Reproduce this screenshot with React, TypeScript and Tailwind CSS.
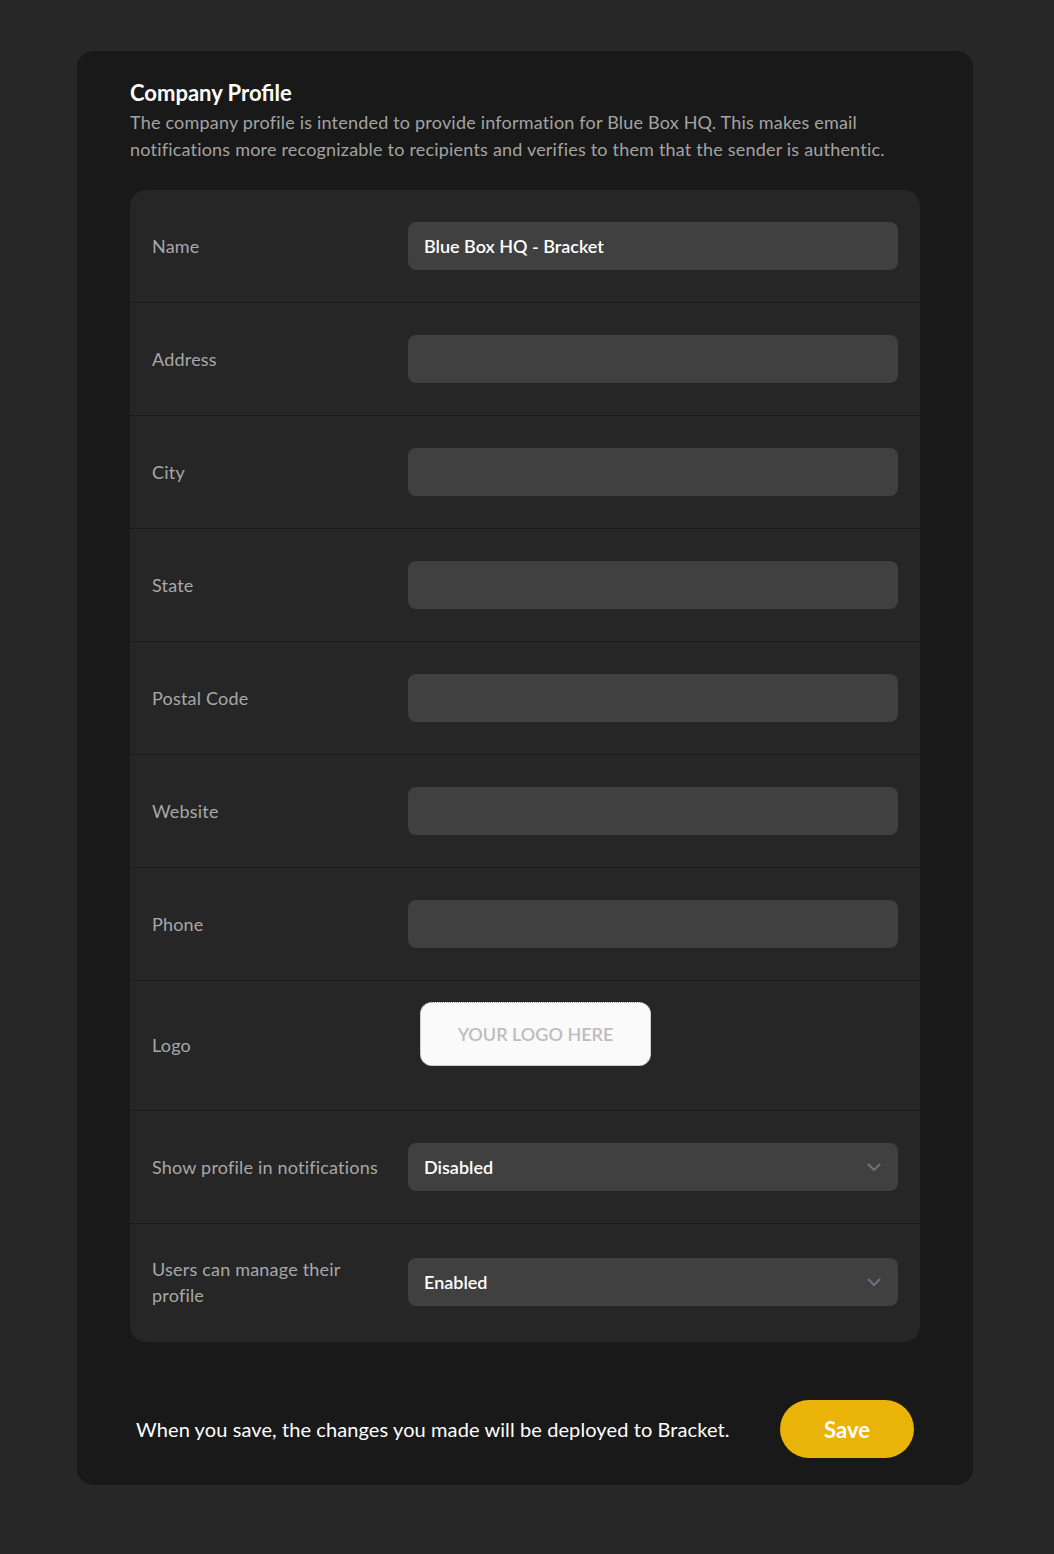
import React from "react";

const font = { fontFamily: "Lato, 'Noto Sans', sans-serif" };

function Chevron() {
  return (
    <svg width="14" height="9" viewBox="0 0 14 9" fill="none">
      <path d="M1.5 1.5L7 7L12.5 1.5" stroke="#6b7280" strokeWidth="2" strokeLinecap="round" strokeLinejoin="round" />
    </svg>
  );
}

function Row({ label, children, last }: { label: string; children: React.ReactNode; last?: boolean }) {
  return (
    <div className={`flex items-center pt-[32px] pl-[22px] pr-[22px] ${last ? "pb-[34px]" : "pb-[32px] border-b border-[#1a1a1a]"}`}>
      <div className="w-[256px] shrink-0 pr-[24px] text-[18px] leading-[26px] tracking-[0.2px] text-[#a8a8a8]">{label}</div>
      <div className="flex-1">{children}</div>
    </div>
  );
}

function Input({ value }: { value?: string }) {
  return (
    <div className="flex h-[48px] items-center rounded-[8px] bg-[#404040] px-[16px] text-[18px] font-semibold text-white">
      {value}
    </div>
  );
}

function Select({ value }: { value: string }) {
  return (
    <div className="flex h-[48px] items-center justify-between rounded-[8px] bg-[#404040] pl-[16px] pr-[17px] text-[18px] font-semibold text-white">
      <span>{value}</span>
      <Chevron />
    </div>
  );
}

export default function App() {
  return (
    <div className="min-h-[1554px] w-full bg-[#272727] pt-[51px] pb-[69px]" style={font}>
      <div className="ml-[77px] w-[896px] rounded-[16px] bg-[#191919] px-[53px] pt-[28px] pb-[27px]">
        <h1 className="text-[22px] font-bold leading-[28px] text-white">Company Profile</h1>
        <p className="mt-[2px] text-[18px] leading-[27px] tracking-[0.2px] text-[#a3a3a3]">
          The company profile is intended to provide information for Blue Box HQ. This makes email notifications more recognizable to recipients and verifies to them that the sender is authentic.
        </p>
        <div className="mt-[27px] rounded-[16px] bg-[#262626]">
          <Row label="Name"><Input value="Blue Box HQ - Bracket" /></Row>
          <Row label="Address"><Input /></Row>
          <Row label="City"><Input /></Row>
          <Row label="State"><Input /></Row>
          <Row label="Postal Code"><Input /></Row>
          <Row label="Website"><Input /></Row>
          <Row label="Phone"><Input /></Row>
          <div className="flex items-center border-b border-[#1a1a1a] pt-[21px] pb-[22px] pl-[22px] pr-[22px]">
            <div className="w-[256px] shrink-0 text-[18px] leading-[26px] tracking-[0.2px] text-[#a8a8a8]">Logo</div>
            <div className="flex-1">
              <div className="mb-[22px] ml-[12px] flex h-[64px] w-[231px] items-center justify-center rounded-[12px] border border-dotted border-[#9e9e9e] bg-[#fafafa] text-[18px] font-semibold text-[#bdbdbd]">
                YOUR LOGO HERE
              </div>
            </div>
          </div>
          <Row label="Show profile in notifications"><Select value="Disabled" /></Row>
          <Row label="Users can manage their profile" last><Select value="Enabled" /></Row>
        </div>
        <div className="mt-[58px] flex items-center justify-between pl-[6px] pr-[6px]">
          <span className="text-[20px] leading-[28px] text-white tracking-[0.1px]">
            When you save, the changes you made will be deployed to Bracket.
          </span>
          <button className="flex h-[58px] w-[134px] items-center justify-center rounded-full bg-[#eab308] text-[22px] font-bold text-white">
            Save
          </button>
        </div>
      </div>
    </div>
  );
}
